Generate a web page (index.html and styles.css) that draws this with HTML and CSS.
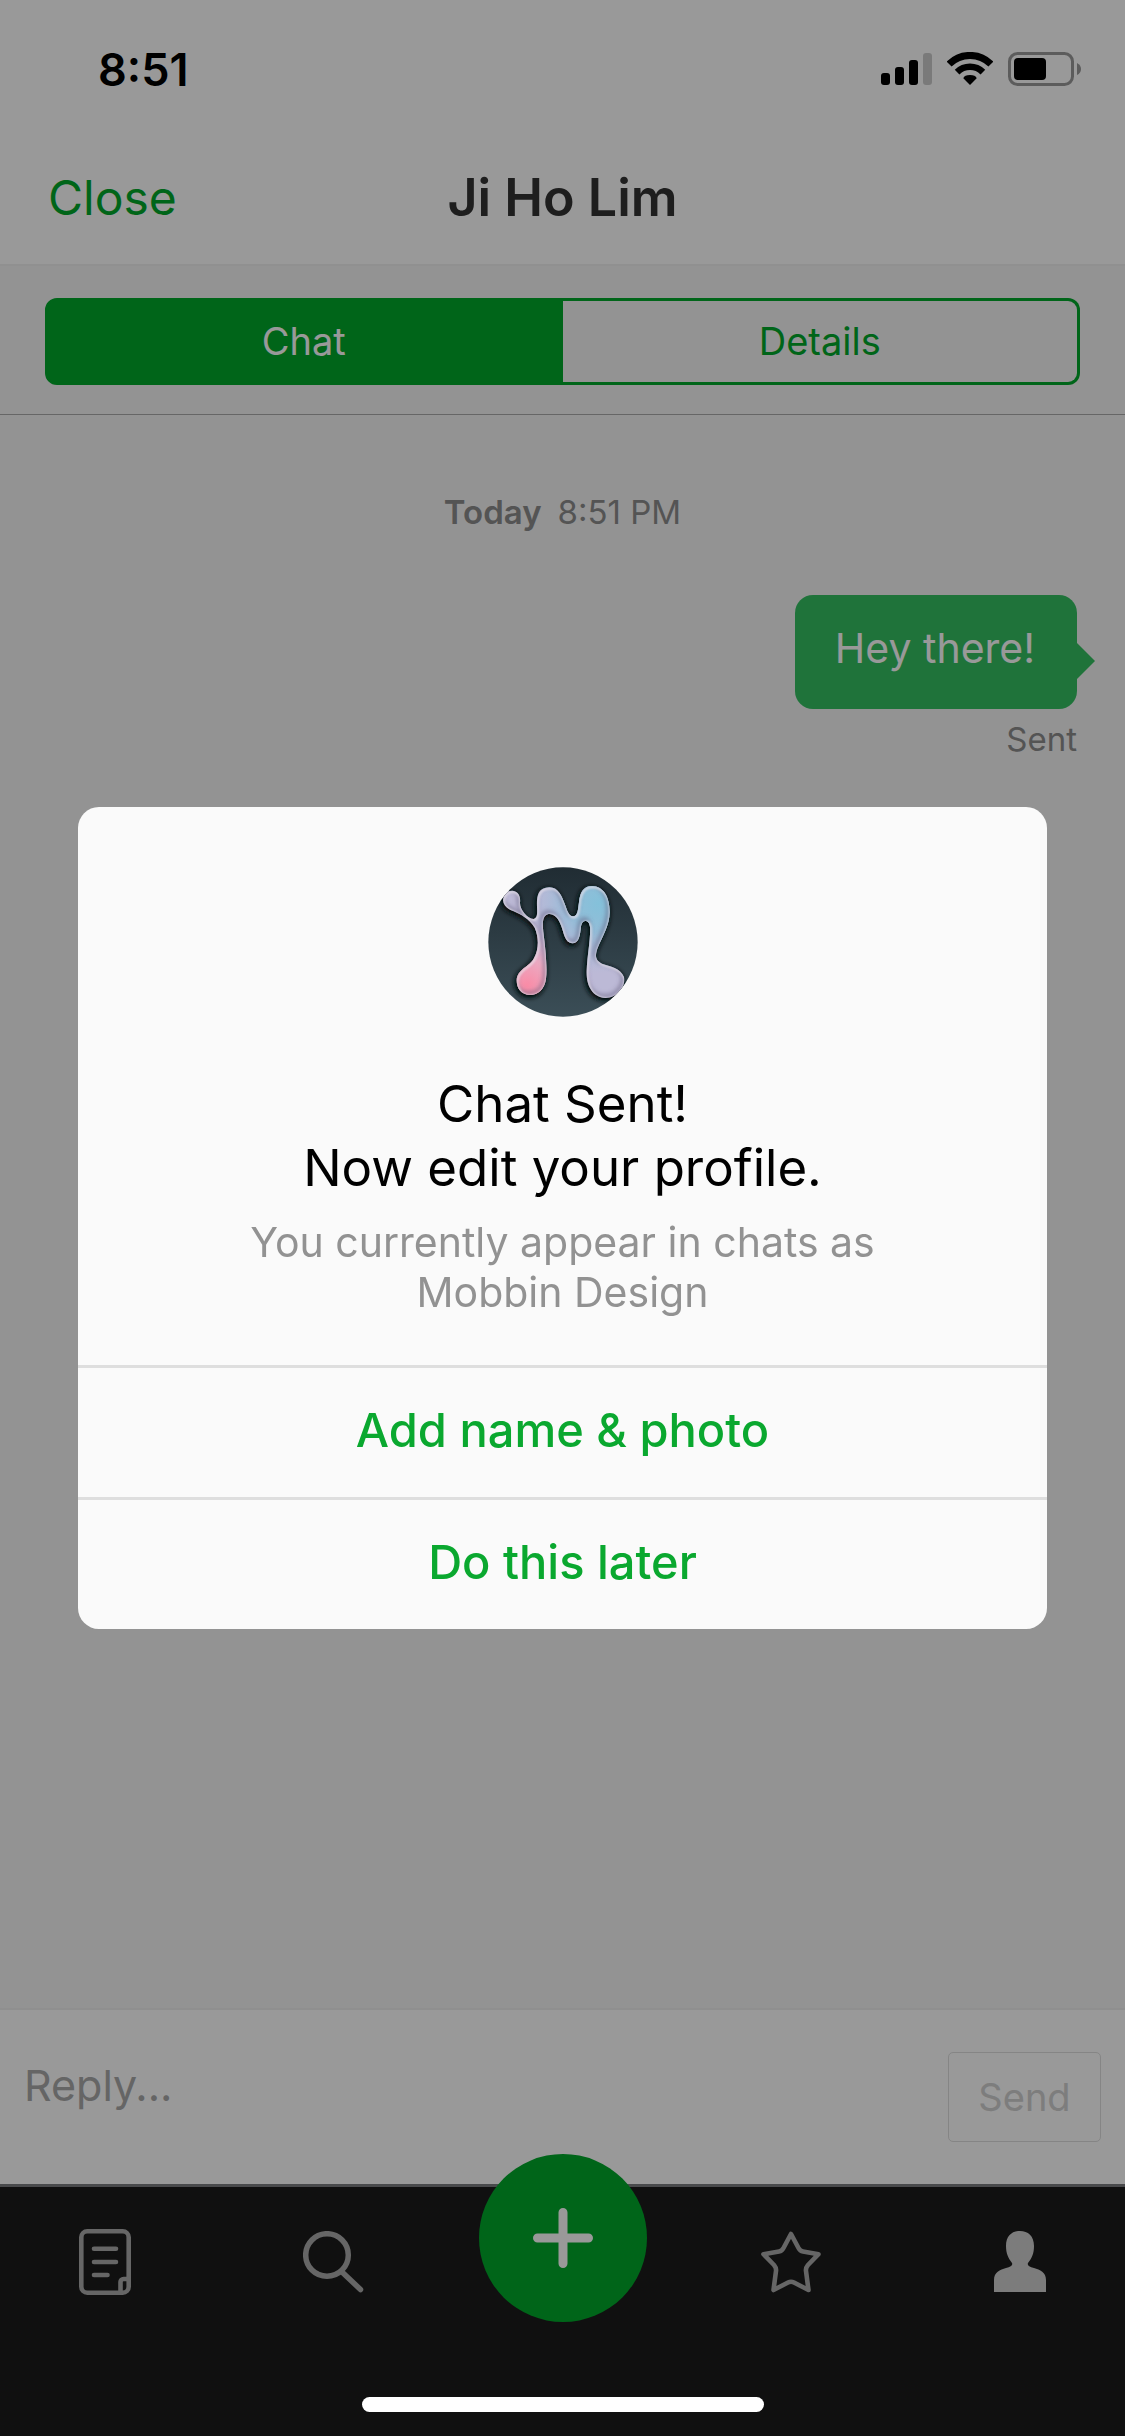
FILE: index.html
```html
<!DOCTYPE html>
<html lang="en">
<head>
<meta charset="utf-8">
<meta name="viewport" content="width=device-width, initial-scale=1">
<title>Ji Ho Lim</title>
<link rel="stylesheet" href="styles.css">
</head>
<body>
<div class="screen">
  <div class="status">
    <time class="clock">8:51</time>
    <div class="status-icons">
      <svg width="51" height="34" viewBox="0 0 51 34" aria-hidden="true">
        <rect x="0" y="21" width="9" height="12" rx="3"/>
        <rect x="14" y="15" width="9" height="18" rx="3"/>
        <rect x="28" y="8" width="9" height="25" rx="3"/>
        <rect x="42" y="1" width="9" height="32" rx="3" fill-opacity=".2"/>
      </svg>
      <svg width="46" height="34" viewBox="0 0 46 34" aria-hidden="true">
        <path d="M2.1 12.1A29.5 29.5 0 0 1 43.9 12.1" fill="none" stroke="#000" stroke-width="7"/>
        <path d="M10.1 20.1A18.3 18.3 0 0 1 35.9 20.1" fill="none" stroke="#000" stroke-width="6.6"/>
        <path d="M23 33L16.3 26.3Q17.500 23 23 23T29.700 26.300Z"/>
      </svg>
      <svg width="73" height="34" viewBox="0 0 73 34" aria-hidden="true">
        <rect x="1.500" y="1.500" width="63" height="31" rx="8" fill="none" stroke="#000" stroke-opacity=".4" stroke-width="3"/>
        <rect x="6" y="6" width="32" height="22" rx="4"/>
        <path d="M69 11Q73 13 73 17T69 23Z" fill-opacity=".4"/>
      </svg>
    </div>
  </div>
  <header class="nav">
    <button class="close" type="button">Close</button>
    <h1 class="nav-title">Ji Ho Lim</h1>
  </header>
  <div class="segments-bar">
    <div class="segments">
      <button class="segment segment-on" type="button">Chat</button>
      <button class="segment" type="button">Details</button>
    </div>
  </div>
  <main class="chat">
    <p class="day"><b>Today</b><span>8:51 PM</span></p>
    <div class="message">
      <p class="bubble">Hey there!</p>
      <p class="receipt">Sent</p>
    </div>
  </main>
  <form class="reply">
    <input class="reply-text" type="text" placeholder="Reply..." aria-label="Reply">
    <button class="send" type="button">Send</button>
  </form>
  <nav class="tabs">
    <button class="tab" type="button" aria-label="Feed">
      <svg width="52" height="66" viewBox="0 0 52 66" fill="none" stroke="#aaa" stroke-width="4.600" stroke-linecap="round">
        <rect x="2.300" y="2.300" width="47.400" height="61.400" rx="6"/>
        <path d="M15 19.700H37M15 33H37M15 46H28.500M41.500 63V53a3 3 0 0 1 3-3H49"/>
      </svg>
    </button>
    <button class="tab" type="button" aria-label="Search">
      <svg width="62" height="62" viewBox="0 0 62 62" fill="none" stroke="#aaa" stroke-width="5.500" stroke-linecap="round">
        <circle cx="24" cy="24" r="21.300"/>
        <path d="M39 41L57.500 58.500"/>
      </svg>
    </button>
    <div class="tab">
      <button class="add" type="button" aria-label="New">
        <svg width="60" height="60" viewBox="0 0 60 60" stroke="#fff" stroke-width="9" stroke-linecap="round">
          <path d="M30 4.500V55.500M4.500 30H55.500"/>
        </svg>
      </button>
    </div>
    <button class="tab" type="button" aria-label="Favourites">
      <svg width="60" height="62" viewBox="0 0 60 62" fill="none" stroke="#aaa" stroke-width="4.600" stroke-linejoin="round">
        <path d="M30 3L37.500 17Q39 20 42 20.500L57.500 23.200L47 34Q44.500 37 45 40L47.500 59L33 51.500Q30 50 27 51.500L12.500 59L15 40Q15.500 37 13 34L2.500 23.200L18 20.500Q21 20 22.500 17Z"/>
      </svg>
    </button>
    <button class="tab" type="button" aria-label="Profile">
      <svg width="52" height="62" viewBox="0 0 52 62" fill="#cfcfcf">
        <path d="M0 61V49C0 41 6 39 12 37C17 36 19 34 18 32C14 27 12 22 12 15C12 5 18 0 26 0S40 5 40 15C40 22 38 27 34 32C33 34 35 36 40 37C46 39 52 41 52 49V61Z"/>
      </svg>
    </button>
  </nav>
</div>
<div class="overlay">
  <section class="dialog" role="dialog" aria-modal="true" aria-labelledby="dialog-title">
    <div class="dialog-body">
      <svg class="avatar" viewBox="138 80 450 450" aria-hidden="true">
        <defs>
          <linearGradient id="back" x1="0" y1="0" x2="0" y2="1"><stop offset="0" stop-color="#202c33"/><stop offset="1" stop-color="#3b4e57"/></linearGradient>
          <radialGradient id="pink" gradientUnits="userSpaceOnUse" cx="255" cy="435" r="200"><stop offset="0" stop-color="#f98ba6"/><stop offset=".4" stop-color="#ebabc3"/><stop offset="1" stop-color="#c9a9cf" stop-opacity="0"/></radialGradient>
          <radialGradient id="blue" gradientUnits="userSpaceOnUse" cx="470" cy="190" r="210"><stop offset="0" stop-color="#84c1da"/><stop offset=".4" stop-color="#93bdd8"/><stop offset="1" stop-color="#a9bbdb" stop-opacity="0"/></radialGradient>
          <clipPath id="disc"><circle cx="363" cy="305" r="224"/></clipPath>
          <clipPath id="inside"><use href="#blob"/></clipPath>
          <filter id="soft" x="-20%" y="-20%" width="140%" height="140%"><feGaussianBlur stdDeviation="6"/></filter>
          <filter id="fine" x="-20%" y="-20%" width="140%" height="140%"><feGaussianBlur stdDeviation="3"/></filter>
          <path id="blob" d="M183 180C185 158 198 150 212 151C232 154 236 172 234 188C234 208 255 234 275 236C286 232 286 222 285 200C284 170 286 142 322 141C350 141 360 170 368 190C375 208 380 228 393 228C408 228 408 205 411 185C414 155 425 137 450 137C485 138 503 170 503 215C503 255 480 290 466 325C460 345 458 358 480 370C505 378 535 382 546 410C552 440 525 474 490 473C450 470 432 435 434 390C436 340 446 300 444 260C442 236 420 236 417 258C414 285 412 310 390 309C368 306 366 280 358 258C350 232 335 220 320 221C302 224 301 245 304 275C310 320 316 380 312 415C308 445 290 464 262 464C238 462 224 445 224 420C226 385 262 380 275 355C292 325 290 290 278 262C262 235 235 222 215 213C195 205 184 195 183 180Z"/>
        </defs>
        <g clip-path="url(#disc)">
          <rect x="138" y="80" width="450" height="450" fill="url(#back)"/>
          <use href="#blob" x="-3" y="5" stroke="#0b1216" stroke-width="10" filter="url(#soft)"/>
          <use href="#blob" fill="#bcb9d6"/>
          <use href="#blob" fill="url(#pink)"/>
          <use href="#blob" fill="url(#blue)"/>
          <g clip-path="url(#inside)">
            <use href="#blob" x="-4" y="-5" fill="none" stroke="#5a5474" stroke-opacity=".5" stroke-width="12" filter="url(#soft)"/>
            <use href="#blob" x="2" y="3" fill="none" stroke="#fbf6fb" stroke-opacity=".8" stroke-width="6" filter="url(#fine)"/>
          </g>
        </g>
      </svg>
      <h2 class="dialog-title" id="dialog-title">Chat Sent!<br>Now edit your profile.</h2>
      <p class="dialog-text">You currently appear in chats as<br>Mobbin Design</p>
    </div>
    <button class="dialog-action" type="button">Add name &amp; photo</button>
    <button class="dialog-action" type="button">Do this later</button>
  </section>
</div>
<div class="home-indicator"></div>
</body>
</html>
```
FILE: styles.css
```css
* { box-sizing: border-box; }

body {
  margin: 0;
  font-family: Inter, "Liberation Sans", sans-serif;
  color: #000;
}

h1, h2, p { margin: 0; font-weight: 400; }

button, input {
  margin: 0;
  padding: 0;
  border: 0;
  background: none;
  font: inherit;
}

svg { display: block; }

.screen {
  display: flex;
  flex-direction: column;
  min-height: 100vh;
  background: #f5f5f5;
}

.status {
  display: flex;
  justify-content: space-between;
  align-items: center;
  height: 132px;
  padding: 6px 44px 0 98px;
  background: #fff;
}

.clock { font-size: 45px; font-weight: 600; }

.status-icons { display: flex; gap: 15px; }

.nav {
  display: grid;
  grid-template-columns: 1fr auto 1fr;
  align-items: center;
  height: 134px;
  padding: 0 48px 2px;
  background: #fff;
  border-bottom: 2px solid #f0f0f0;
}

.close {
  justify-self: start;
  font-size: 48px;
  color: #00a82b;
}

.nav-title {
  font-size: 52px;
  font-weight: 600;
  color: #333;
}

.segments-bar {
  padding: 32px 45px 29px;
  border-bottom: 1px solid #aaa;
}

.segments {
  display: grid;
  grid-template-columns: 1fr 1fr;
  height: 87px;
}

.segment {
  padding-bottom: 2px;
  border: 3px solid #00a82b;
  border-left-width: 0;
  border-radius: 0 12px 12px 0;
  font-size: 38px;
  color: #00a82b;
}

.segment-on {
  border-left-width: 3px;
  border-radius: 12px 0 0 12px;
  background: #00a82b;
  color: #fff;
}

.chat {
  flex: 1;
  padding: 73px 48px;
}

.day {
  display: flex;
  justify-content: center;
  gap: 16px;
  font-size: 33px;
  line-height: 48px;
  color: #8c8c8c;
}

.day b { font-weight: 600; }

.message {
  display: flex;
  flex-direction: column;
  align-items: flex-end;
  gap: 9px;
  margin-top: 59px;
}

.bubble {
  position: relative;
  padding: 28px 42px 36px 40px;
  border-radius: 18px;
  background: #34c062;
  font-size: 41px;
  line-height: 50px;
  color: #fff;
}

.bubble::after {
  content: "";
  position: absolute;
  top: 48px;
  left: 100%;
  border: 18px solid transparent;
  border-left-color: #34c062;
  border-right-width: 0;
}

.receipt {
  font-size: 33px;
  line-height: 42px;
  color: #8c8c8c;
}

.reply {
  display: flex;
  gap: 24px;
  padding: 42px 24px;
  background: #fff;
  border-top: 2px solid #efefef;
}

.reply-text {
  flex: 1;
  min-width: 0;
  height: 66px;
  font-size: 43px;
}

.reply-text::placeholder { color: #a8a8a8; opacity: 1; }

.send {
  width: 153px;
  height: 90px;
  border: 1px solid #dedede;
  border-radius: 5px;
  font-size: 38px;
  color: #d0d0d0;
}

.tabs {
  display: grid;
  grid-template-columns: repeat(5, 84px);
  justify-content: space-between;
  height: 252px;
  padding: 24px 63px 0;
  background: #1b1b1b;
  border-top: 3px solid #7b7c7f;
}

.tab {
  position: relative;
  display: flex;
  justify-content: center;
  align-items: center;
  height: 102px;
}

.add {
  position: absolute;
  top: -57px;
  left: -42px;
  display: flex;
  justify-content: center;
  align-items: center;
  width: 168px;
  height: 168px;
  border-radius: 50%;
  background: #00a82b;
}

.overlay {
  position: fixed;
  inset: 0;
  display: flex;
  align-items: center;
  padding: 0 78px;
  background: rgba(0, 0, 0, .4);
}

.dialog {
  flex: 1;
  display: flex;
  flex-direction: column;
  border-radius: 21px;
  background: #fafafa;
  text-align: center;
}

.dialog-body { padding: 60px 48px 48px; }

.avatar {
  width: 150px;
  height: 150px;
  margin: 0 auto 55px;
}

.dialog-title {
  font-size: 51px;
  line-height: 64px;
}

.dialog-text {
  margin-top: 17px;
  font-size: 41px;
  line-height: 50px;
  color: #929292;
}

.dialog-action {
  height: 132px;
  padding-bottom: 6px;
  border-top: 3px solid #dedede;
  font-size: 47px;
  font-weight: 500;
  color: #0aa82f;
}

.home-indicator {
  position: fixed;
  bottom: 24px;
  left: 50%;
  width: 402px;
  height: 15px;
  margin-left: -201px;
  border-radius: 8px;
  background: #fff;
}
```
